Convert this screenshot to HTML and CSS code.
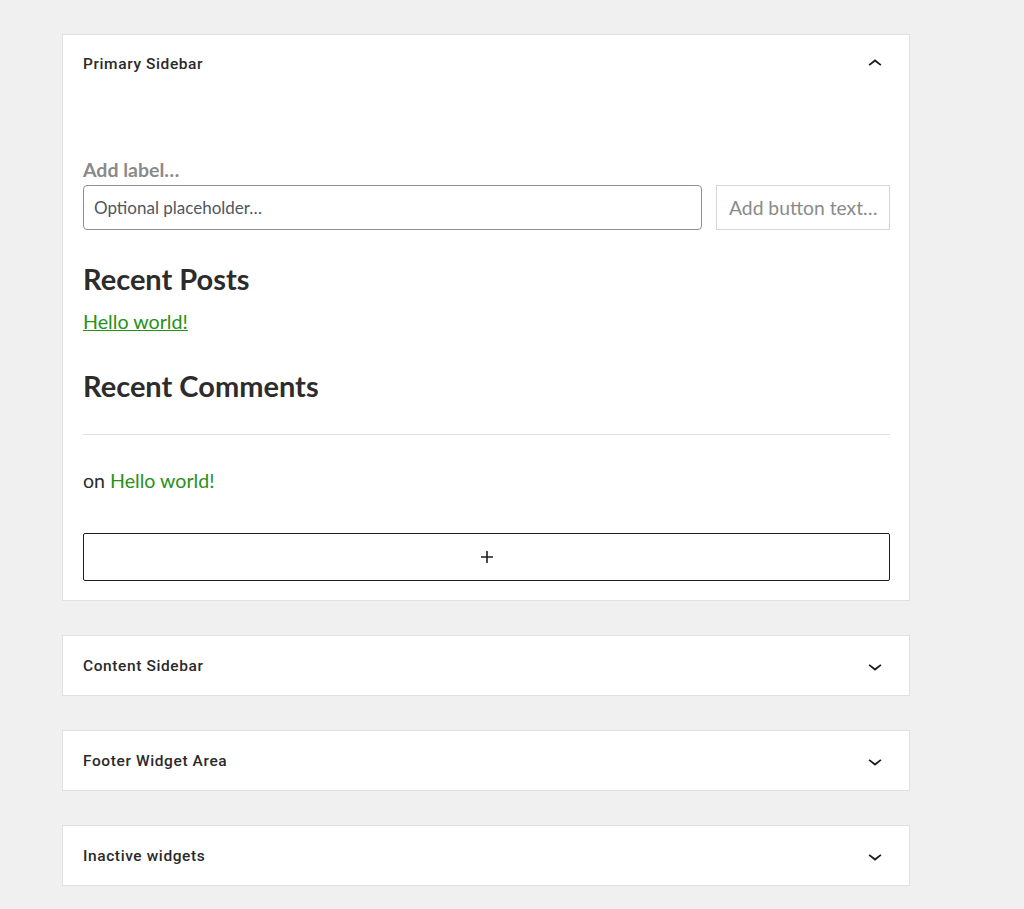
FILE: index.html
```html
<!DOCTYPE html>
<html lang="en">
<head>
    <meta charset="UTF-8">
    <meta name="viewport" content="width=device-width, initial-scale=1.0">
    <title>Widgets</title>
    <link rel="stylesheet" href="styles.css">
</head>
<body>

    <div class="areas">
        <section class="area open">
            <div class="area-head">
                <h3>Primary Sidebar</h3>
                <svg class="chevron" width="28" height="28" viewBox="0 0 24 24"><path d="M6.5 12.4L12 8l5.5 4.4-.9 1.2L12 10l-4.6 3.6-1-1.2z"></path></svg>
            </div>
            <div class="area-body">
                <div class="search-label">Add label…</div>
                <div class="search-row">
                    <div class="search-input">Optional placeholder…</div>
                    <div class="search-button">Add button text…</div>
                </div>

                <h2>Recent Posts</h2>
                <a class="post-link" href="#">Hello world!</a>

                <h2 class="comments-title">Recent Comments</h2>
                <hr>
                <p class="comment">on <a href="#">Hello world!</a></p>

                <button class="add-block">
                    <svg width="24" height="24" viewBox="0 0 24 24"><path d="M18 11.2h-5.2V6h-1.6v5.2H6v1.6h5.2V18h1.6v-5.2H18z"></path></svg>
                </button>
            </div>
        </section>

        <section class="area">
            <div class="area-head">
                <h3>Content Sidebar</h3>
                <svg class="chevron" width="28" height="28" viewBox="0 0 24 24"><path d="M17.5 11.6L12 16l-5.5-4.4.9-1.2L12 14l4.6-3.6 1 1.2z"></path></svg>
            </div>
        </section>

        <section class="area">
            <div class="area-head">
                <h3>Footer Widget Area</h3>
                <svg class="chevron" width="28" height="28" viewBox="0 0 24 24"><path d="M17.5 11.6L12 16l-5.5-4.4.9-1.2L12 14l4.6-3.6 1 1.2z"></path></svg>
            </div>
        </section>

        <section class="area">
            <div class="area-head">
                <h3>Inactive widgets</h3>
                <svg class="chevron" width="28" height="28" viewBox="0 0 24 24"><path d="M17.5 11.6L12 16l-5.5-4.4.9-1.2L12 14l4.6-3.6 1 1.2z"></path></svg>
            </div>
        </section>
    </div>

</body>
</html>
```

FILE: styles.css
```css
body {
    margin: 0;
    background-color: #f0f0f0;
    font-family: Lato, "Open Sans", sans-serif;
    color: #2c2c2c;
}
.areas {
    display: flex;
    flex-direction: column;
    gap: 34px;
    width: 848px;
    padding: 34px 0 0 62px;
}
.area {
    background: #fff;
    border: 1px solid #e0e0e0;
}
.area-head {
    display: flex;
    align-items: center;
    justify-content: space-between;
    height: 59px;
    padding: 0 20px 0 20px;
}
.open .area-head {
    height: 57px;
}
.area-head h3 {
    margin: 0;
    font-family: Roboto, "Noto Sans", sans-serif;
    font-size: 15.5px;
    font-weight: 500;
    letter-spacing: 0.6px;
    color: #2a2a2a;
}
.chevron {
    fill: #1e1e1e;
}
.area-body {
    padding: 66px 19px 19px 20px;
}
.search-label {
    font-size: 19.5px;
    font-weight: 700;
    line-height: 24px;
    color: #8a8a8a;
}
.search-row {
    display: flex;
    gap: 14px;
    margin-top: 3px;
}
.search-input {
    flex: 1;
    height: 43px;
    padding: 0 10px;
    display: flex;
    align-items: center;
    border: 1px solid #8c8f94;
    border-radius: 4px;
    font-size: 17px;
    color: #50575e;
    white-space: nowrap;
}
.search-button {
    width: 149px;
    height: 43px;
    padding: 0 11px 0 12px;
    display: flex;
    align-items: center;
    border: 1px solid #d6d6d6;
    font-size: 19.3px;
    color: #8a8a8a;
    white-space: nowrap;
}
h2 {
    margin: 32px 0 14px;
    font-size: 29px;
    font-weight: 700;
    line-height: 34px;
}
.post-link {
    display: block;
    font-size: 19.7px;
    line-height: 24px;
    color: #279119;
}
.comments-title {
    margin: 35px 0 31px;
}
hr {
    margin: 0;
    border: 0;
    border-top: 1px solid #dedede;
}
.comment {
    margin: 34px 0 40px;
    font-size: 19.6px;
    line-height: 24px;
}
.comment a {
    color: #279119;
    text-decoration: none;
}
.add-block {
    display: flex;
    align-items: center;
    justify-content: center;
    width: 100%;
    height: 48px;
    background: #fff;
    border: 1px solid #1e1e1e;
    border-radius: 2px;
}
.add-block svg {
    fill: #1e1e1e;
}
```
